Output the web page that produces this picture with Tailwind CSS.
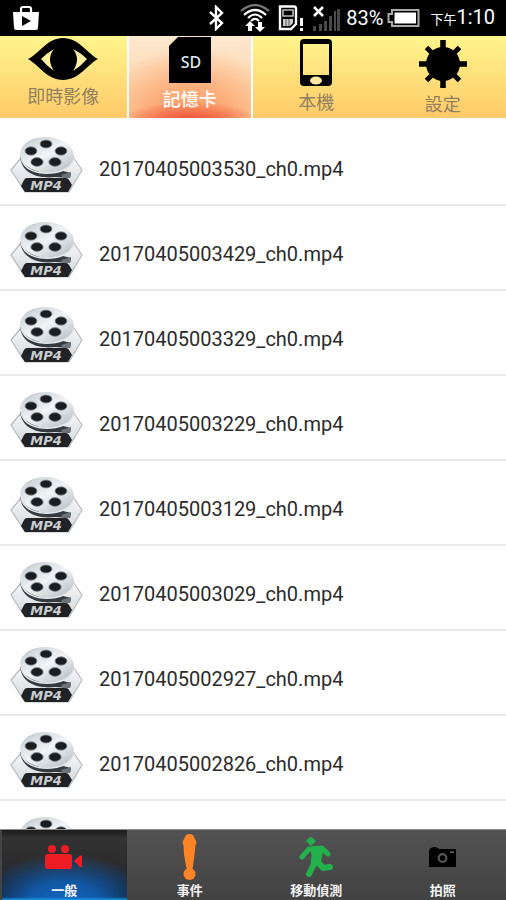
<!DOCTYPE html>
<html lang="zh-Hant">
<head>
  <meta charset="UTF-8">
  <meta name="viewport" content="width=device-width, initial-scale=1">
  <title>記憶卡</title>
  <script src="https://cdn.jsdelivr.net/npm/@tailwindcss/browser@4"></script>
</head>
<body class="h-screen flex flex-col overflow-hidden bg-white font-[Roboto,'Noto_Sans_CJK_TC',sans-serif]">

  <!-- Shared icon for every mp4 row -->
  <svg class="absolute w-0 h-0">
    <defs>
      <linearGradient id="steel" x1="0" y1="0" x2="1" y2="1">
        <stop offset="0" stop-color="#98a2aa"/>
        <stop offset=".2" stop-color="#d3dade"/>
        <stop offset=".5" stop-color="#f1f4f6"/>
        <stop offset="1" stop-color="#aab3b9"/>
      </linearGradient>
      <linearGradient id="hex" x1="0" y1="0" x2="0" y2="1">
        <stop offset="0" stop-color="#ffffff"/>
        <stop offset="1" stop-color="#cfd5d9"/>
      </linearGradient>
      <symbol id="reel" viewBox="0 0 75 58">
        <path d="M18 14 L2 33 L16 55 H60 L73 33 L60 14 Z" fill="url(#hex)" stroke="#b4babf" stroke-width="1.2" stroke-linejoin="round"/>
        <path d="M11 20 C13 37 30 42 46 40 L61 41 L62 36 L54 34 Z" fill="#343a3f"/>
        <path d="M52 38 L62 35 L61 41 L54 41 Z" fill="#6c7479"/>
        <ellipse cx="38" cy="18" rx="27" ry="18" transform="rotate(4 38 18)" fill="url(#steel)"/>
        <path d="M12 21 C15 33 28 37 42 36 C54 35 62 31 65 22" fill="none" stroke="#e4e8ea" stroke-width="1.5"/>
        <g fill="#1b1e21" stroke="#8b9399" stroke-width=".8">
          <ellipse cx="37" cy="7" rx="6" ry="4"/>
          <ellipse cx="22" cy="14" rx="6" ry="4.2"/>
          <ellipse cx="52" cy="14" rx="6" ry="4.2"/>
          <ellipse cx="28" cy="25" rx="6.2" ry="4.4"/>
          <ellipse cx="46" cy="25" rx="6.2" ry="4.4"/>
        </g>
        <path d="M18 41 H57 Q59 41 60 43 L63 48 L59 55 H16 L12 49 L15 43 Q16 41 18 41 Z" fill="#202225"/>
        <text x="37" y="53" text-anchor="middle" font-family="DejaVu Sans, sans-serif" font-size="13" font-style="italic" font-weight="bold" fill="#c9cdcf">MP4</text>
      </symbol>
    </defs>
  </svg>

  <!-- Status bar -->
  <header class="h-9 shrink-0 flex items-center bg-black text-white pl-[13px] pr-[11px]">
    <svg class="w-[26px] h-[26px]" viewBox="0 0 26 26">
      <path d="M8 7 V4 Q8 2 10 2 H16 Q18 2 18 4 V7" fill="none" stroke="#fff" stroke-width="2.2"/>
      <path d="M0 7 H26 L25 23 Q25 25 23 25 H3 Q1 25 1 23 Z" fill="#fff"/>
      <path d="M9 11 L18 16 L9 21 Z" fill="#000"/>
    </svg>
    <svg class="ml-auto w-4 h-[26px]" viewBox="0 0 16 26">
      <path d="M2 7 L14 18 L8 24 V2 L14 8 L2 19" fill="none" stroke="#fff" stroke-width="2.4"/>
    </svg>
    <svg class="ml-4 w-[30px] h-7" viewBox="0 0 30 28">
      <g fill="none" stroke="#fff" stroke-width="2.2">
        <path d="M1 7 Q15 -5 29 7" stroke="#777"/>
        <path d="M4 11 Q15 1 26 11"/>
        <path d="M8 14 Q15 7 22 14"/>
        <path d="M11 17 Q15 13 19 17"/>
      </g>
      <path d="M10 17 L15 22 H12 V27 H8 V22 H5 Z M20 28 L15 23 H18 V18 H22 V23 H25 Z" fill="#fff"/>
    </svg>
    <svg class="ml-2 w-[26px] h-[26px]" viewBox="0 0 26 26">
      <path d="M2 1.5 H16 Q18 1.5 18 4 V19 L13 24 H2 Z" fill="none" stroke="#fff" stroke-width="2.4"/>
      <path d="M5 5 H15 V11 H5 Z" fill="none" stroke="#bbb" stroke-width="1.6"/>
      <path d="M5 14 H15 V18 L12 21 H5 Z" fill="#ccc"/>
      <path d="M8 14 V21 M11 14 V21" stroke="#555"/>
      <path d="M22 13 H25 V21 H22 Z M22 23 H25 V26 H22 Z" fill="#fff"/>
    </svg>
    <svg class="ml-2 w-[30px] h-[26px]" viewBox="0 0 30 26">
      <path d="M2 2 L11 11 M11 2 L2 11" stroke="#fff" stroke-width="2.6"/>
      <path d="M1 21 H4 V26 H1 Z M7 19 H10 V26 H7 Z M12 16 H15 V26 H12 Z M17 11 H20 V26 H17 Z M22 6 H24 V26 H22 Z M25 4 H28 V26 H25 Z" fill="#4a4a4a"/>
    </svg>
    <span class="ml-1 text-[20px] leading-6">83%</span>
    <svg class="ml-1 w-[33px] h-5" viewBox="0 0 33 20">
      <path d="M5 2 H31.5 V18 H5 V14 H1.500 V6 H5 Z" fill="none" stroke="#aaa" stroke-width="2"/>
      <path d="M7.500 4.500 H29 V15.500 H7.500 Z" fill="#fff"/>
    </svg>
    <span class="ml-2.5 flex items-baseline text-[20px] leading-6"><span class="text-[13px]">下午</span>1:10</span>
  </header>

  <!-- Source tabs -->
  <nav class="h-[82px] shrink-0 grid grid-cols-4 text-[18px] leading-6 text-[#927f60]">
    <button class="flex flex-col items-center gap-[5px] bg-linear-to-b from-[#fff58c] to-[#ffca69]">
      <svg class="w-[72px] h-11" viewBox="0 0 72 44">
        <path d="M1 23 C12 18 20 2 36 2 C52 2 61 18 71 23 C61 28 52 44 36 44 C20 44 12 29 1 23 Z"/>
        <path d="M14 23 Q20 17 27 13 Q19 23 27 35 Q20 30 14 23 Z M60 23 Q54 17 46 13 Q54 23 46 35 Q54 30 60 23 Z" fill="#fff2a0"/>
      </svg>
      即時影像
    </button>
    <button aria-current="page" class="flex flex-col items-center gap-[5px] border-x-2 border-white font-medium text-white bg-[radial-gradient(ellipse_55%_22%_at_50%_102%,#ea4f36_0%,#f4744e_45%,#f4744e00_100%),radial-gradient(ellipse_75%_85%_at_50%_100%,#fb9d68_0%,#fbab78_40%,#fbab7800_100%),linear-gradient(#fde8d0,#fdcc98)]">
      <svg class="w-[42px] h-[47px]" viewBox="0 0 42 47">
        <path d="M9 1 H42 V47 H0 V10 Z"/>
        <text x="22" y="32" text-anchor="middle" font-family="Noto Sans, sans-serif" font-size="16" font-weight="500" fill="#dfeaf0">SD</text>
      </svg>
      記憶卡
    </button>
    <button class="flex flex-col items-center gap-[5px] bg-linear-to-b from-[#fff58c] to-[#ffca69]">
      <svg class="w-[34px] h-[50px]" viewBox="0 0 34 50">
        <path fill-rule="evenodd" d="M5 3 H29 Q33 3 33 7 V46 Q33 50 29 50 H5 Q1 50 1 46 V7 Q1 3 5 3 Z M4 8 V39 H30 V8 Z"/>
        <ellipse cx="17" cy="44.500" rx="6" ry="4" fill="#ffe9a0"/>
      </svg>
      本機
    </button>
    <button class="flex flex-col items-center gap-[5px] bg-linear-to-b from-[#fff58c] to-[#ffca69]">
      <svg class="w-12 h-[52px]" viewBox="0 0 48 52">
        <circle cx="24" cy="28" r="17"/>
        <path d="M24 4 V52 M0 28 H48" stroke="#000" stroke-width="5.500"/>
        <path d="M7.500 11.500 L40.500 44.500 M40.500 11.500 L7.500 44.500" stroke="#000" stroke-width="5"/>
      </svg>
      設定
    </button>
  </nav>

  <!-- Recordings -->
  <main class="flex-1 min-h-0 overflow-y-auto [scrollbar-width:none] pt-[3px]">
    <ul class="text-[20px] leading-6 text-[#2b2b2b]">
      <li class="h-[85px] border-b-2 border-[#e9e9e9]">
        <a href="#" class="flex items-center gap-[15px] pl-[9px] pt-4"><svg class="w-[75px] h-[58px]"><use href="#reel"/></svg><span class="pt-1.5">20170405003530_ch0.mp4</span></a>
      </li>
      <li class="h-[85px] border-b-2 border-[#e9e9e9]">
        <a href="#" class="flex items-center gap-[15px] pl-[9px] pt-4"><svg class="w-[75px] h-[58px]"><use href="#reel"/></svg><span class="pt-1.5">20170405003429_ch0.mp4</span></a>
      </li>
      <li class="h-[85px] border-b-2 border-[#e9e9e9]">
        <a href="#" class="flex items-center gap-[15px] pl-[9px] pt-4"><svg class="w-[75px] h-[58px]"><use href="#reel"/></svg><span class="pt-1.5">20170405003329_ch0.mp4</span></a>
      </li>
      <li class="h-[85px] border-b-2 border-[#e9e9e9]">
        <a href="#" class="flex items-center gap-[15px] pl-[9px] pt-4"><svg class="w-[75px] h-[58px]"><use href="#reel"/></svg><span class="pt-1.5">20170405003229_ch0.mp4</span></a>
      </li>
      <li class="h-[85px] border-b-2 border-[#e9e9e9]">
        <a href="#" class="flex items-center gap-[15px] pl-[9px] pt-4"><svg class="w-[75px] h-[58px]"><use href="#reel"/></svg><span class="pt-1.5">20170405003129_ch0.mp4</span></a>
      </li>
      <li class="h-[85px] border-b-2 border-[#e9e9e9]">
        <a href="#" class="flex items-center gap-[15px] pl-[9px] pt-4"><svg class="w-[75px] h-[58px]"><use href="#reel"/></svg><span class="pt-1.5">20170405003029_ch0.mp4</span></a>
      </li>
      <li class="h-[85px] border-b-2 border-[#e9e9e9]">
        <a href="#" class="flex items-center gap-[15px] pl-[9px] pt-4"><svg class="w-[75px] h-[58px]"><use href="#reel"/></svg><span class="pt-1.5">20170405002927_ch0.mp4</span></a>
      </li>
      <li class="h-[85px] border-b-2 border-[#e9e9e9]">
        <a href="#" class="flex items-center gap-[15px] pl-[9px] pt-4"><svg class="w-[75px] h-[58px]"><use href="#reel"/></svg><span class="pt-1.5">20170405002826_ch0.mp4</span></a>
      </li>
      <li class="h-[85px]">
        <a href="#" class="flex items-center gap-[15px] pl-[9px] pt-4" aria-label="mp4"><svg class="w-[75px] h-[58px]"><use href="#reel"/></svg></a>
      </li>
    </ul>
  </main>

  <!-- Recording type -->
  <nav class="h-[71px] shrink-0 grid grid-cols-4 border-t border-[#8c8c8c] bg-linear-to-b from-[#525252] to-[#424242] text-[13px] leading-4 font-bold text-[#f2f2f2]">
    <button aria-current="page" class="flex flex-col items-center pb-px border-l-2 border-[#444] bg-[linear-gradient(to_top,#1597e8_0,#1597e800_3px),radial-gradient(ellipse_70%_65%_at_50%_100%,#0f66c0_0%,#1257a3_40%,#12407500_100%),linear-gradient(#1c1c1c,#323232_12%,#2c2c2e_50%,#0c1622)]">
      <span class="flex-1 flex items-center">
        <svg class="w-[38px] h-6" viewBox="0 0 38 24" fill="#f01c24">
          <circle cx="7" cy="4" r="4"/>
          <circle cx="20" cy="4" r="4"/>
          <rect y="9" width="27" height="15" rx="3"/>
          <path d="M29 16 L35 10.500 H37 V22 H35 Z"/>
        </svg>
      </span>
      一般
    </button>
    <button class="flex flex-col items-center pb-px">
      <span class="flex-1 flex items-center">
        <svg class="w-[15px] h-[46px]" viewBox="0 0 15 46" fill="#ff8427">
          <path d="M4 1 Q7.500 -1 11 1 L14 7 Q15 9 13.500 11 L12.500 21 L11 32 L10 37 H5.500 L4 32 L2 20 L1.500 11 Q0 9 1 7 Z"/>
          <circle cx="7.500" cy="40" r="6"/>
        </svg>
      </span>
      事件
    </button>
    <button class="flex flex-col items-center pb-px">
      <span class="flex-1 flex items-center">
        <svg class="w-[34px] h-10" viewBox="0 0 34 40" fill="none" stroke="#22b14c" stroke-linecap="round" stroke-linejoin="round">
          <path d="M12 0 L16.500 4 L12 8.500 L7.500 4 Z" fill="#22b14c" stroke-width="1"/>
          <path d="M3 20 L10 12 L23 11 L29 17" stroke-width="5"/>
          <path d="M13 13 H23 L20 27 L13 29 L14 18 Z" fill="#22b14c" stroke-width="3"/>
          <path d="M15 27 L10 37 M18 24 L24 31 L31 30" stroke-width="6"/>
        </svg>
      </span>
      移動偵測
    </button>
    <button class="flex flex-col items-center pb-px">
      <span class="flex-1 flex items-center">
        <svg class="w-[27px] h-5" viewBox="0 0 27 20">
          <path d="M0 3 L2 1 Q5 -1 9 1 L10 2 H27 V20 H0 Z" fill="#000"/>
          <circle cx="13.500" cy="11" r="3.800" fill="none" stroke="#555" stroke-width="2.200"/>
          <path d="M21 4.500 H25 V6 H21 Z" fill="#666"/>
        </svg>
      </span>
      拍照
    </button>
  </nav>
</body>
</html>
